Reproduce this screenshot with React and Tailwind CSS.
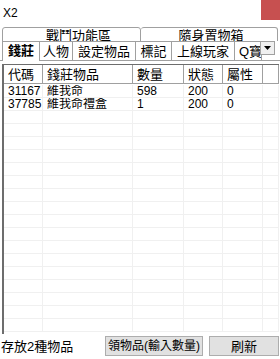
import React from 'react';

const font = { fontFamily: '"Liberation Sans", "Noto Sans CJK TC", sans-serif' };

const columns = [
  { label: '代碼', w: 'w-[39px]' },
  { label: '錢莊物品', w: 'w-[90px]' },
  { label: '數量', w: 'w-[51px]' },
  { label: '狀態', w: 'w-[39px]' },
  { label: '屬性', w: 'w-[40px]' },
  { label: '', w: 'flex-1' },
];

const items = [
  ['31167', '維我命', '598', '200', '0'],
  ['37785', '維我命禮盒', '1', '200', '0'],
];

const tabs = ['人物', '設定物品', '標記', '上線玩家'];
const tabWidths = ['w-[33px]', 'w-[63px]', 'w-[36px]', 'w-[63px]'];

export default function App() {
  const rows = [...items];
  while (rows.length < 19) rows.push(['', '', '', '', '']);

  return (
    <div className="w-[280px] h-[359px] bg-white flex flex-col text-[12px] text-black overflow-hidden" style={font}>
      {/* title bar */}
      <div className="h-[27px] flex items-start justify-between">
        <span className="pl-[3px] pt-[6px] text-[12px] leading-[14px]">X2</span>
        <div className="w-[19px] h-[20px] bg-[#c75050]" />
      </div>

      {/* upper tab row */}
      <div className="h-[14px] flex px-[2px] overflow-hidden">
        <div className="w-[139px] h-[20px] border border-[#a0a0a0] rounded-t-[3px] flex justify-center text-[13px] leading-[13px] pt-[1px] pl-[14px] whitespace-nowrap">戰鬥功能區</div>
        <div className="w-[137px] h-[20px] border border-[#a0a0a0] border-l-0 rounded-t-[3px] flex justify-center text-[13px] leading-[13px] pt-[1px] pl-[4px] whitespace-nowrap">隨身置物箱</div>
      </div>

      {/* lower tab row */}
      <div className="h-[20px] flex items-end pl-[2px] border-b border-[#a0a0a0]">
        <div className="w-[38px] h-[20px] border border-b-0 border-[#a0a0a0] bg-white flex items-center justify-center font-bold text-[13px] leading-[13px] -mb-px pb-[2px] relative z-10">錢莊</div>
        {tabs.map((t, i) => (
          <div key={t} className={`${tabWidths[i]} h-[19px] border border-l-0 border-b-0 border-[#a0a0a0] flex items-center justify-center text-[13px] leading-[13px] whitespace-nowrap`}>{t}</div>
        ))}
        <div className="w-[27px] h-[19px] border border-l-0 border-b-0 border-[#a0a0a0] flex items-center pl-[4px] text-[13px] leading-[13px] overflow-hidden whitespace-nowrap">Q寶石</div>
        <div className="w-[15px] h-[14px] mb-[5px] -ml-[2px] border border-[#a0a0a0] bg-[#f0f0f0] flex items-center justify-center relative z-10">
          <svg width="7" height="4" viewBox="0 0 7 4"><path d="M0 0h7L3.5 4z" fill="#000" /></svg>
        </div>
      </div>

      {/* list */}
      <div className="flex-1 mt-[3px] ml-[2px] mr-[1px] border-l-2 border-t border-[#6d6d6d] flex flex-col overflow-hidden">
        <div className="h-[19px] flex border-b border-[#a0a0a0]">
          {columns.map((c, i) => (
            <div key={i} className={`${c.w} border-r border-[#a0a0a0] pl-[4px] flex items-center text-[13px] leading-[13px]`}>{c.label}</div>
          ))}
        </div>
        <div className="flex-1 flex flex-col pt-[1px]">
          {rows.map((r, ri) => (
            <div key={ri} className="h-[13px] flex border-b border-[#f0f0f0] shrink-0">
              {columns.map((c, ci) => (
                <div key={ci} className={`${c.w} border-r border-[#f0f0f0] pl-[4px] text-[12px] leading-[13px] whitespace-nowrap overflow-hidden`}>{r[ci] ?? ''}</div>
              ))}
            </div>
          ))}
        </div>
      </div>

      {/* bottom bar */}
      <div className="h-[25px] flex items-center pl-[1px] pr-[1px] pb-[1px]">
        <span className="w-[104px] text-[13px] leading-[13px] whitespace-nowrap">存放2種物品</span>
        <button className="w-[98px] h-[20px] border border-[#adadad] bg-[#e1e1e1] text-[12px] leading-[13px] flex items-center justify-center whitespace-nowrap">領物品(輸入數量)</button>
        <button className="ml-[6px] w-[70px] h-[20px] border border-[#adadad] bg-[#e1e1e1] text-[13px] leading-[13px] flex items-center justify-center">刷新</button>
      </div>
    </div>
  );
}
